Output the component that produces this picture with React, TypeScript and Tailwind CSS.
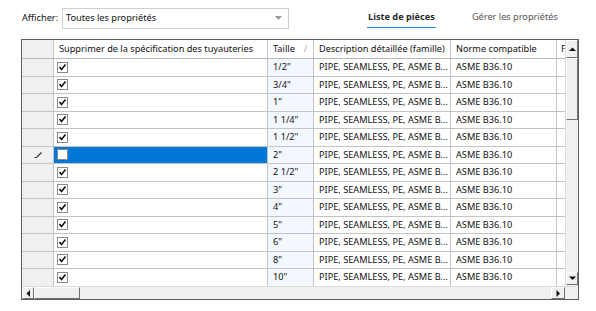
import React from "react";

const sizes = ['1/2"', '3/4"', '1"', '1 1/4"', '1 1/2"', '2"', '2 1/2"', '3"', '4"', '5"', '6"', '8"', '10"'];
const SELECTED = 5;

const font = { fontFamily: '"Segoe UI", "Noto Sans", sans-serif' };

const Check = ({ checked }: { checked: boolean }) => (
  <div className="w-[11px] h-[11px] border border-[#8a8a8a] bg-white flex items-center justify-center">
    {checked && (
      <svg width="9" height="9" viewBox="0 0 9 9">
        <path d="M1.5 4 L3.5 6.5 L7.5 1.5" stroke="#111" strokeWidth="1.6" fill="none" />
      </svg>
    )}
  </div>
);

const Arrow = ({ dir }: { dir: "up" | "down" | "left" | "right" }) => {
  const pts = {
    up: "1,5 4.5,1.5 8,5",
    down: "1,1.5 4.5,5 8,1.5",
    left: "5,1 1.5,4.5 5,8",
    right: "1.5,1 5,4.5 1.5,8",
  }[dir];
  const horiz = dir === "left" || dir === "right";
  return (
    <svg width={horiz ? 7 : 9} height={horiz ? 9 : 7} viewBox={horiz ? "0 0 7 9" : "0 0 9 7"}>
      <polygon points={pts} fill="#111" />
    </svg>
  );
};

const Btn = ({ className, children }: { className: string; children?: React.ReactNode }) => (
  <div
    className={`bg-[#f0f0f0] border border-t-white border-l-white border-r-[#6f6f6f] border-b-[#6f6f6f] flex items-center justify-center shrink-0 ${className}`}
  >
    {children}
  </div>
);

const cell = "border-r border-[#c4c4c4] pl-[5px] whitespace-nowrap overflow-hidden shrink-0";

export default function App() {
  return (
    <div className="w-[596px] h-[311px] bg-white text-[9.2px] text-[#111] overflow-hidden" style={font}>
      <div className="flex items-center h-[20px] mt-[8px]">
        <span className="ml-[22px] w-[40px]">Afficher:</span>
        <div className="w-[227px] h-[21px] border border-[#cfcfcf] flex items-center pl-[3px] pr-[6px]">
          <span className="flex-1">Toutes les propriétés</span>
          <svg width="7" height="4" viewBox="0 0 7 4">
            <polygon points="0,0 7,0 3.5,4" fill="#9a9a9a" />
          </svg>
        </div>
        <div className="ml-[78px] h-[20px] flex flex-col items-center">
          <span className="font-bold text-[#2b2b2b] leading-[18px] px-[1px]">Liste de pièces</span>
          <div className="h-[2px] self-stretch bg-[#1e8ad6] mt-[1px]" />
        </div>
        <span className="ml-[36px] text-[#555] leading-[18px] mb-[2px]">Gérer les propriétés</span>
      </div>

      <div className="ml-[21px] mt-[11px] w-[558px] h-[261px] border border-[#5e5e5e] flex flex-col">
        <div className="flex h-[246px]">
          <div className="w-[543px] overflow-hidden">
            <div className="flex h-[19px] border-b border-[#b9b9b9] leading-[18px]">
              <div className="w-[32px] border-r border-[#c4c4c4] bg-[#f0f0f0] shrink-0" />
              <div className={`w-[214px] ${cell}`}>Supprimer de la spécification des tuyauteries</div>
              <div className={`w-[46px] ${cell} flex items-center`}>
                <span className="flex-1">Taille</span>
                <span className="text-[8px] text-[#999] mr-[6px]">/</span>
              </div>
              <div className={`w-[137px] ${cell}`}>Description détaillée (famille)</div>
              <div className={`w-[106px] ${cell}`}>Norme compatible</div>
              <div className="w-[8px] pl-[4px] overflow-hidden">F</div>
            </div>
            {sizes.map((s, i) => {
              const sel = i === SELECTED;
              return (
                <div key={s} className="flex h-[17.5px] border-b border-[#c4c4c4] leading-[16px]">
                  <div className="w-[32px] border-r border-[#c4c4c4] bg-[#f0f0f0] flex items-center justify-center shrink-0">
                    {sel && (
                      <svg width="8" height="6" viewBox="0 0 8 6">
                        <path d="M0.5 5.5 H3 M3 5 L7.5 0.5" stroke="#333" strokeWidth="1.2" />
                      </svg>
                    )}
                  </div>
                  <div
                    className={`w-[214px] border-r border-[#c4c4c4] pl-[3px] flex items-center shrink-0 ${sel ? "bg-[#0078d7]" : "bg-white"}`}
                  >
                    <Check checked={!sel} />
                  </div>
                  <div className={`w-[46px] ${cell} bg-[#f3f8fe]`}>{s}</div>
                  <div className={`w-[137px] ${cell}`}>PIPE, SEAMLESS, PE, ASME B...</div>
                  <div className={`w-[106px] ${cell}`}>ASME B36.10</div>
                  <div className="w-[8px]" />
                </div>
              );
            })}
          </div>
          <div className="w-[13px] flex flex-col bg-[#f0f0f0] border-l border-[#dcdcdc]">
            <Btn className="h-[18px]">
              <Arrow dir="up" />
            </Btn>
            <Btn className="h-[62px]" />
            <div className="flex-1" />
            <Btn className="h-[13px] mb-[1px]">
              <Arrow dir="down" />
            </Btn>
          </div>
        </div>
        <div className="flex h-[13px] bg-[#f0f0f0] border-t border-[#dcdcdc]">
          <Btn className="w-[12px]">
            <Arrow dir="left" />
          </Btn>
          <Btn className="w-[46px]" />
          <div className="flex-1" />
          <Btn className="w-[14px]">
            <Arrow dir="right" />
          </Btn>
          <div className="w-[13px]" />
        </div>
      </div>
    </div>
  );
}
